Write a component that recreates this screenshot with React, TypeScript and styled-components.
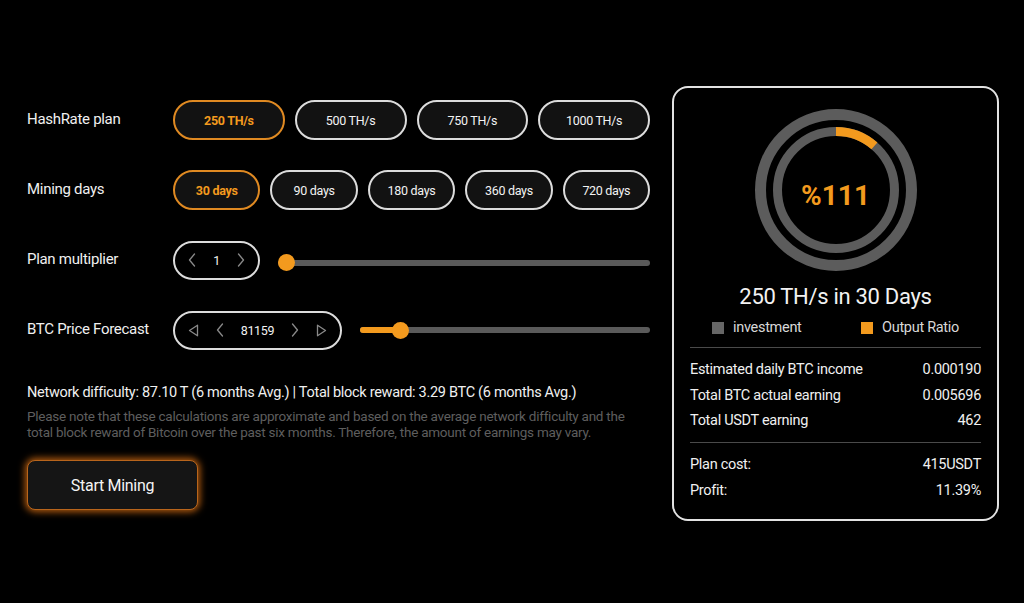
import { createGlobalStyle } from 'styled-components';
import styled from 'styled-components';

const ORANGE = '#f39a1e';

const GlobalStyle = createGlobalStyle`
    * { box-sizing: border-box; }
    html, body {
        margin: 0;
        padding: 0;
        background: #000;
        color: #eee;
        font-family: Roboto, "Noto Sans", Arial, sans-serif;
        letter-spacing: -0.3px;
    }
`;

const hashRates = ['250 TH/s', '500 TH/s', '750 TH/s', '1000 TH/s'];
const miningDays = ['30 days', '90 days', '180 days', '360 days', '720 days'];

const earnings = [
    { label: 'Estimated daily BTC income', value: '0.000190' },
    { label: 'Total BTC actual earning', value: '0.005696' },
    { label: 'Total USDT earning', value: '462' },
];

const costs = [
    { label: 'Plan cost:', value: '415USDT' },
    { label: 'Profit:', value: '11.39%' },
];

const Chevron = ({ dir }: { dir: 'left' | 'right' }) => (
    <svg width="8" height="14" viewBox="0 0 8 14" fill="none">
        <path
            d={dir === 'left' ? 'M6.5 1L1.5 7l5 6' : 'M1.5 1l5 6-5 6'}
            stroke="#8a8a8a"
            strokeWidth="1.3"
            strokeLinecap="round"
            strokeLinejoin="round"
        />
    </svg>
);

const Triangle = ({ dir }: { dir: 'left' | 'right' }) => (
    <svg width="11" height="13" viewBox="0 0 11 13" fill="none">
        <path
            d={dir === 'left' ? 'M9.5 1.2v10.6L1.5 6.5z' : 'M1.5 1.2v10.6l8-5.3z'}
            stroke="#8a8a8a"
            strokeWidth="1.3"
            strokeLinejoin="round"
        />
    </svg>
);

const Ring = () => {
    const inner = 58.5;
    const circ = 2 * Math.PI * inner;
    const ratio = 0.1139;
    return (
        <svg width="162" height="162" viewBox="0 0 162 162">
            <circle cx="81" cy="81" r="75.5" fill="none" stroke="#5c5c5c" strokeWidth="11" />
            <circle cx="81" cy="81" r={inner} fill="none" stroke="#5c5c5c" strokeWidth="9" />
            <circle
                cx="81"
                cy="81"
                r={inner}
                fill="none"
                stroke={ORANGE}
                strokeWidth="9"
                strokeDasharray={`${circ * ratio} ${circ}`}
                transform="rotate(-90 81 81)"
            />
        </svg>
    );
};

export default function App() {
    return (
        <>
            <GlobalStyle />
            <Page>
                <Calculator>
                    <Row>
                        <Label>HashRate plan</Label>
                        <Options>
                            {hashRates.map((rate, i) => (
                                <Pill key={rate} $active={i === 0}>{rate}</Pill>
                            ))}
                        </Options>
                    </Row>
                    <Row>
                        <Label>Mining days</Label>
                        <Options>
                            {miningDays.map((day, i) => (
                                <Pill key={day} $active={i === 0}>{day}</Pill>
                            ))}
                        </Options>
                    </Row>
                    <Row>
                        <Label>Plan multiplier</Label>
                        <Stepper $width={87}>
                            <Chevron dir="left" />
                            <StepValue>1</StepValue>
                            <Chevron dir="right" />
                        </Stepper>
                        <Slider $offset={5}>
                            <Track />
                            <Thumb style={{ left: 0 }} />
                        </Slider>
                    </Row>
                    <Row>
                        <Label>BTC Price Forecast</Label>
                        <Stepper $width={169}>
                            <Triangle dir="left" />
                            <Chevron dir="left" />
                            <StepValue>81159</StepValue>
                            <Chevron dir="right" />
                            <Triangle dir="right" />
                        </Stepper>
                        <Slider $offset={0}>
                            <Track />
                            <Fill style={{ width: 40 }} />
                            <Thumb style={{ left: 32 }} />
                        </Slider>
                    </Row>
                    <Network>
                        Network difficulty: 87.10 T (6 months Avg.) | Total block reward: 3.29 BTC (6 months Avg.)
                    </Network>
                    <Note>
                        Please note that these calculations are approximate and based on the average network difficulty and the
                        total block reward of Bitcoin over the past six months. Therefore, the amount of earnings may vary.
                    </Note>
                    <StartButton>Start Mining</StartButton>
                </Calculator>

                <Card>
                    <RingWrap>
                        <Ring />
                        <Percent>%111</Percent>
                    </RingWrap>
                    <PlanTitle>250 TH/s in 30 Days</PlanTitle>
                    <Legend>
                        <LegendItem><Swatch $color="#666" />investment</LegendItem>
                        <LegendItem><Swatch $color={ORANGE} />Output Ratio</LegendItem>
                    </Legend>
                    <Divider $gap={11} />
                    <Stats>
                        {earnings.map((row) => (
                            <StatRow key={row.label}><span>{row.label}</span><span>{row.value}</span></StatRow>
                        ))}
                    </Stats>
                    <Divider $gap={12} />
                    <Stats>
                        {costs.map((row) => (
                            <StatRow key={row.label}><span>{row.label}</span><span>{row.value}</span></StatRow>
                        ))}
                    </Stats>
                </Card>
            </Page>
        </>
    );
}

const Page = styled.div`
    width: 1024px;
    height: 603px;
    padding: 86px 0 0 27px;
    display: flex;
    align-items: flex-start;
    gap: 22px;
`;

const Calculator = styled.div`
    width: 623px;
    padding-top: 14px;
    display: flex;
    flex-direction: column;
`;

const Row = styled.div`
    height: 40px;
    margin-bottom: 30px;
    display: flex;
    align-items: center;
`;

const Label = styled.div`
    width: 146px;
    flex-shrink: 0;
    font-size: 15px;
    color: #f0f0f0;
    margin-top: -3px;
`;

const Options = styled.div`
    flex: 1;
    display: flex;
    gap: 10px;
`;

const Pill = styled.div<{ $active: boolean }>`
    flex: 1;
    height: 40px;
    border-radius: 20px;
    border: 2px solid ${(p) => (p.$active ? '#e08a22' : '#dcdcdc')};
    background: #121212;
    color: ${(p) => (p.$active ? ORANGE : '#f2f2f2')};
    font-size: 12.5px;
    font-weight: ${(p) => (p.$active ? 700 : 400)};
    display: flex;
    align-items: center;
    justify-content: center;
`;

const Stepper = styled.div<{ $width: number }>`
    width: ${(p) => p.$width}px;
    height: 39px;
    flex-shrink: 0;
    border-radius: 20px;
    border: 2px solid #dcdcdc;
    padding: 0 13px;
    display: flex;
    align-items: center;
    justify-content: space-between;
`;

const StepValue = styled.span`
    font-size: 12.5px;
    color: #f2f2f2;
`;

const Slider = styled.div<{ $offset: number }>`
    position: relative;
    flex: 1;
    height: 16px;
    margin: ${(p) => p.$offset}px 0 0 18px;
    display: flex;
    align-items: center;
`;

const Track = styled.div`
    width: 100%;
    height: 6px;
    border-radius: 3px;
    background: #5a5a5a;
`;

const Fill = styled.div`
    position: absolute;
    left: 0;
    top: 5px;
    height: 6px;
    border-radius: 3px;
    background: ${ORANGE};
`;

const Thumb = styled.div`
    position: absolute;
    top: -0.5px;
    width: 17px;
    height: 17px;
    border-radius: 50%;
    background: ${ORANGE};
`;

const Network = styled.p`
    margin: 4px 0 0;
    font-size: 14.5px;
    line-height: 18px;
    letter-spacing: -0.3px;
    color: #f0f0f0;
`;

const Note = styled.p`
    margin: 6px 0 0;
    font-size: 13.5px;
    line-height: 16px;
    letter-spacing: -0.25px;
    color: #5e5e5e;
`;

const StartButton = styled.button`
    margin-top: 20px;
    width: 171px;
    height: 50px;
    border-radius: 8px;
    border: 1.5px solid #b8651c;
    background: #151515;
    color: #f4f4f4;
    font-family: inherit;
    letter-spacing: -0.3px;
    font-size: 16px;
    box-shadow: 0 0 7px 2px rgba(235, 120, 20, 0.75);
    cursor: pointer;
`;

const Card = styled.div`
    width: 327px;
    height: 435px;
    border: 2px solid #e2e2e2;
    border-radius: 16px;
    background: #000;
    padding: 21px 16px 0;
    display: flex;
    flex-direction: column;
    align-items: stretch;
`;

const RingWrap = styled.div`
    position: relative;
    align-self: center;
    width: 162px;
    height: 162px;
    display: flex;
    align-items: center;
    justify-content: center;

    svg {
        position: absolute;
        inset: 0;
    }
`;

const Percent = styled.span`
    position: relative;
    margin-top: 10px;
    font-size: 28px;
    font-weight: 700;
    color: ${ORANGE};
    letter-spacing: 0;
`;

const PlanTitle = styled.div`
    margin-top: 13px;
    text-align: center;
    font-size: 22px;
    color: #f2f2f2;
`;

const Legend = styled.div`
    margin-top: 10px;
    padding: 0 22px;
    display: flex;
    justify-content: space-between;
`;

const LegendItem = styled.div`
    display: flex;
    align-items: center;
    gap: 9px;
    font-size: 14.5px;
    color: #d8d8d8;
`;

const Swatch = styled.span<{ $color: string }>`
    width: 12px;
    height: 12px;
    background: ${(p) => p.$color};
`;

const Divider = styled.div<{ $gap: number }>`
    height: 1px;
    background: #4a4a4a;
    margin-top: ${(p) => p.$gap}px;
`;

const Stats = styled.div`
    padding: 13px 0 0;
    display: flex;
    flex-direction: column;
    gap: 7.5px;
`;

const StatRow = styled.div`
    display: flex;
    justify-content: space-between;
    font-size: 14.5px;
    line-height: 18px;
    color: #f0f0f0;
`;
